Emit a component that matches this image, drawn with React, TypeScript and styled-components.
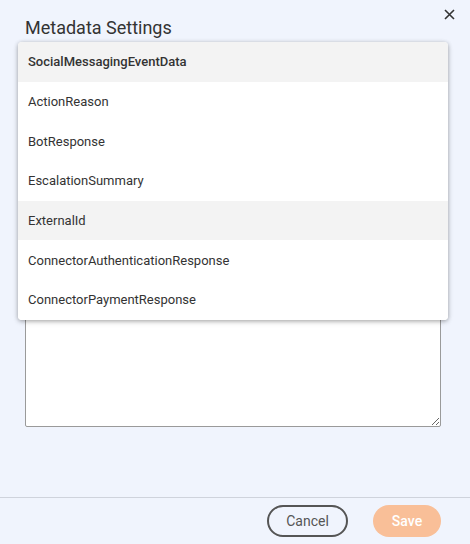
import React from 'react';
import styled, { createGlobalStyle } from 'styled-components';

const GlobalStyle = createGlobalStyle`
  html, body {
    margin: 0;
    padding: 0;
    background: #f0f4fd;
    font-family: Roboto, "Liberation Sans", sans-serif;
  }
`;

const Modal = styled.div`
  width: 470px;
  height: 544px;
  display: flex;
  flex-direction: column;
  position: relative;
  background: #f0f4fd;
  box-sizing: border-box;
`;

const Header = styled.div`
  padding: 17px 25px 0;
  height: 42px;
  box-sizing: border-box;
`;

const Title = styled.h2`
  margin: 0;
  font-size: 18px;
  font-weight: 400;
  color: #333;
  line-height: 22px;
`;

const CloseButton = styled.button`
  position: absolute;
  top: 6px;
  right: 13px;
  width: 16px;
  height: 16px;
  padding: 0;
  border: none;
  background: none;
  display: flex;
  align-items: center;
  justify-content: center;
  cursor: pointer;
`;

const Body = styled.div`
  flex: 1;
  padding: 8px 29px 0 25px;
  display: flex;
  flex-direction: column;
  gap: 8px;
`;

const SelectBox = styled.div`
  height: 32px;
  border: 1px solid #999;
  border-radius: 2px;
  background: #fff;
`;

const TextArea = styled.textarea`
  display: block;
  width: 100%;
  height: 335px;
  box-sizing: border-box;
  border: 1px solid #9a9a9a;
  border-radius: 2px;
  background: #fff;
  font-family: inherit;
  font-size: 13px;
  outline: none;
`;

const Menu = styled.ul`
  position: absolute;
  top: 42px;
  left: 18px;
  width: 430px;
  margin: 0;
  padding: 0;
  list-style: none;
  background: #fff;
  border-radius: 4px;
  box-shadow: 0 1px 4px rgba(0, 0, 0, 0.3), 0 2px 6px rgba(0, 0, 0, 0.1);
  overflow: hidden;
  z-index: 2;
`;

const MenuItem = styled.li<{ $selected?: boolean; $hover?: boolean }>`
  height: 39.7px;
  display: flex;
  align-items: center;
  padding-left: 10px;
  font-size: 13px;
  color: #333;
  font-weight: ${p => (p.$selected ? 500 : 400)};
  background: ${p => (p.$selected || p.$hover ? '#f3f3f3' : '#fff')};
`;

const Footer = styled.div`
  height: 47px;
  border-top: 1px solid #cfd3dc;
  display: flex;
  align-items: center;
  justify-content: flex-end;
  gap: 25px;
  padding: 0 29px 0 0;
  box-sizing: border-box;
`;

const Button = styled.button<{ $primary?: boolean }>`
  height: 32px;
  border-radius: 16px;
  font-family: inherit;
  font-size: 14px;
  padding: 0;
  cursor: pointer;
  ${p =>
    p.$primary
      ? `
    width: 68px;
    border: none;
    background: #f9bf98;
    color: #fff;
    font-weight: 500;
  `
      : `
    width: 81px;
    border: 2px solid #555;
    background: transparent;
    color: #555;
  `}
`;

const items = [
  'SocialMessagingEventData',
  'ActionReason',
  'BotResponse',
  'EscalationSummary',
  'ExternalId',
  'ConnectorAuthenticationResponse',
  'ConnectorPaymentResponse',
];

export default function App() {
  return (
    <>
      <GlobalStyle />
      <Modal>
        <Header>
          <Title>Metadata Settings</Title>
        </Header>
        <CloseButton aria-label="Close">
          <svg width="11" height="11" viewBox="0 0 11 11">
            <path d="M1 1L10 10M10 1L1 10" stroke="#333" strokeWidth="1.6" />
          </svg>
        </CloseButton>
        <Body>
          <SelectBox />
          <TextArea />
        </Body>
        <Menu>
          {items.map((it, i) => (
            <MenuItem key={it} $selected={i === 0} $hover={i === 4}>
              {it}
            </MenuItem>
          ))}
        </Menu>
        <Footer>
          <Button>Cancel</Button>
          <Button $primary>Save</Button>
        </Footer>
      </Modal>
    </>
  );
}
